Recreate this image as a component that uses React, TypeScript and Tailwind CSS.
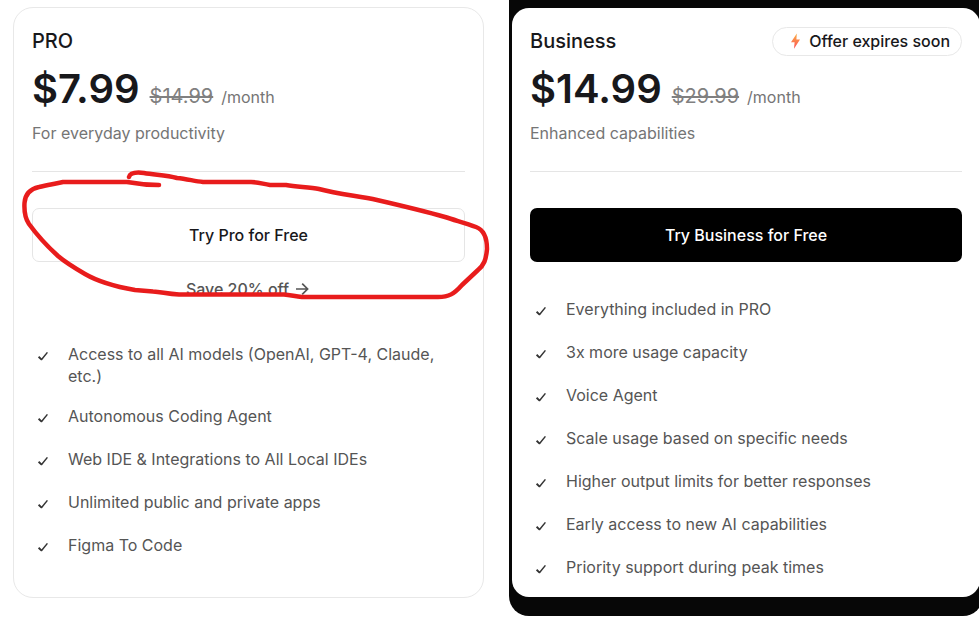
import type { ReactNode } from "react";

const proFeatures = [
  "Access to all AI models (OpenAI, GPT-4, Claude, etc.)",
  "Autonomous Coding Agent",
  "Web IDE & Integrations to All Local IDEs",
  "Unlimited public and private apps",
  "Figma To Code",
];

const businessFeatures = [
  "Everything included in PRO",
  "3x more usage capacity",
  "Voice Agent",
  "Scale usage based on specific needs",
  "Higher output limits for better responses",
  "Early access to new AI capabilities",
  "Priority support during peak times",
];

function CheckIcon() {
  return (
    <svg className="h-6 w-6 shrink-0" viewBox="0 0 24 24" fill="none" stroke="#333333" aria-hidden="true">
      <path d="M6.6 13.8 L9.6 16.6" strokeWidth="1.9" />
      <path d="M9.2 17 L15.4 9.4" strokeWidth="1.5" />
    </svg>
  );
}

function BoltIcon() {
  return (
    <svg className="h-4 w-4" viewBox="0 0 16 16" aria-hidden="true">
      <defs>
        <linearGradient id="bolt" x1="0" y1="0" x2="0" y2="1">
          <stop offset="0" stopColor="#fbb040" />
          <stop offset="1" stopColor="#fb4f5a" />
        </linearGradient>
      </defs>
      <path d="M9.8 0.5 L4 9.3 H7.6 L7 15.8 L13 6.6 H9.4 Z" fill="url(#bolt)" />
    </svg>
  );
}

function ArrowIcon() {
  return (
    <svg className="h-4 w-4" viewBox="0 0 16 16" fill="none" stroke="#555555" strokeWidth="1.7" aria-hidden="true">
      <path d="M1 8 H12.3 M7.2 2.6 L12.6 8 L7.2 13.4" />
    </svg>
  );
}

type PlanProps = {
  name: string;
  price: string;
  oldPrice: string;
  tagline: string;
  badge?: ReactNode;
  features: string[];
  children: ReactNode;
};

function Plan({ name, price, oldPrice, tagline, badge, features, children }: PlanProps) {
  return (
    <>
      <div className="flex h-7 items-center justify-between">
        <h2 className="text-[20px] leading-[30px] font-medium text-[#18181b]">{name}</h2>
        {badge}
      </div>
      <div className="mt-[9px] flex h-[50px] items-baseline">
        <span className="text-[40px] leading-[50px] font-semibold text-[#18181b]">{price}</span>
        <s className="ml-[10px] text-[20px] text-[#808080]">{oldPrice}</s>
        <span className="ml-2 text-[16px] text-[#757575]">/month</span>
      </div>
      <p className="mt-[7px] text-[16px] leading-6 text-[#757575]">{tagline}</p>
      <hr className="mt-[26px] mb-9 border-[#e5e5e5]" />
      {children}
      <ul className="flex flex-col gap-[18px]">
        {features.map((feature) => (
          <li key={feature} className="flex min-h-[25px] items-start gap-3">
            <CheckIcon />
            <span className="text-[16px] leading-[22px] text-[#555555]">{feature}</span>
          </li>
        ))}
      </ul>
    </>
  );
}

export default function App() {
  return (
    <main className="relative overflow-hidden bg-white pb-4 font-['Inter',sans-serif]">
      <div className="-mr-1 grid grid-cols-[471fr_474fr] items-start gap-[25px] pl-[13px]">
        <section className="mt-[7px] rounded-[20px] border border-[#e8e8e8] px-[18px] pt-[19px] pb-[38px]">
          <Plan name="PRO" price="$7.99" oldPrice="$14.99" tagline="For everyday productivity" features={proFeatures}>
            <button className="block h-[54px] w-full rounded-[7px] border border-[#e5e5e5] text-[16px] font-medium text-[#18181b]">
              Try Pro for Free
            </button>
            <a href="#save" className="mt-[15px] mb-[42px] flex h-6 items-center justify-center gap-[6px] text-[16px] font-medium text-[#555555]">
              Save 20% off
              <ArrowIcon />
            </a>
          </Plan>
        </section>
        <section className="rounded-b-[20px] bg-[#070707] px-[3px] pt-2 pb-[19px]">
          <div className="rounded-[17px] bg-white px-[18px] pt-[19px] pb-4">
            <Plan
              name="Business"
              price="$14.99"
              oldPrice="$29.99"
              tagline="Enhanced capabilities"
              features={businessFeatures}
              badge={
                <span className="flex h-[29px] items-center gap-[6px] rounded-full border border-[#e8e8e8] pr-[11px] pl-[14px] text-[16px] font-medium text-[#18181b]">
                  <BoltIcon />
                  Offer expires soon
                </span>
              }
            >
              <button className="mb-9 block h-[54px] w-full rounded-[7px] bg-black text-[16px] font-medium text-white">
                Try Business for Free
              </button>
            </Plan>
          </div>
        </section>
      </div>
      {/* Hand-drawn marker stroke circling the Pro button */}
      <svg
        className="pointer-events-none absolute top-[165px] left-[15px] h-[140px] w-[480px]"
        viewBox="15 165 480 140"
        fill="none"
        stroke="#e81c1c"
        strokeWidth="4.5"
        strokeLinecap="round"
        strokeLinejoin="round"
        aria-hidden="true"
      >
        <path d="M129 177 C130 173 136 172 144 173 C155 175 166 175 177 178 C187 179 194 181 203 182 H251 C258 182 263 184 270 185 H286 C298 187 310 187 319 189 C338 194 358 196 377 200 C403 206 424 211 445 217 C457 221 466 223 476 227 C484 230 487 239 487 249 C486 260 484 265 478 270 L462 285 C454 294 449 297 438 297 H302 C294 296 290 295 284 294.500 H179 C167 294 162 292 153 291.500 L135 290 C112 286 97 281 85 274 C73 267 65 262 58 256 C47 246 37 235 29 224 C25 218 24 212 24.500 203 C25 195 30 189 39 187 C47 185 54 184 63 182 H127 C138 184 144 185 159 185" />
      </svg>
    </main>
  );
}
